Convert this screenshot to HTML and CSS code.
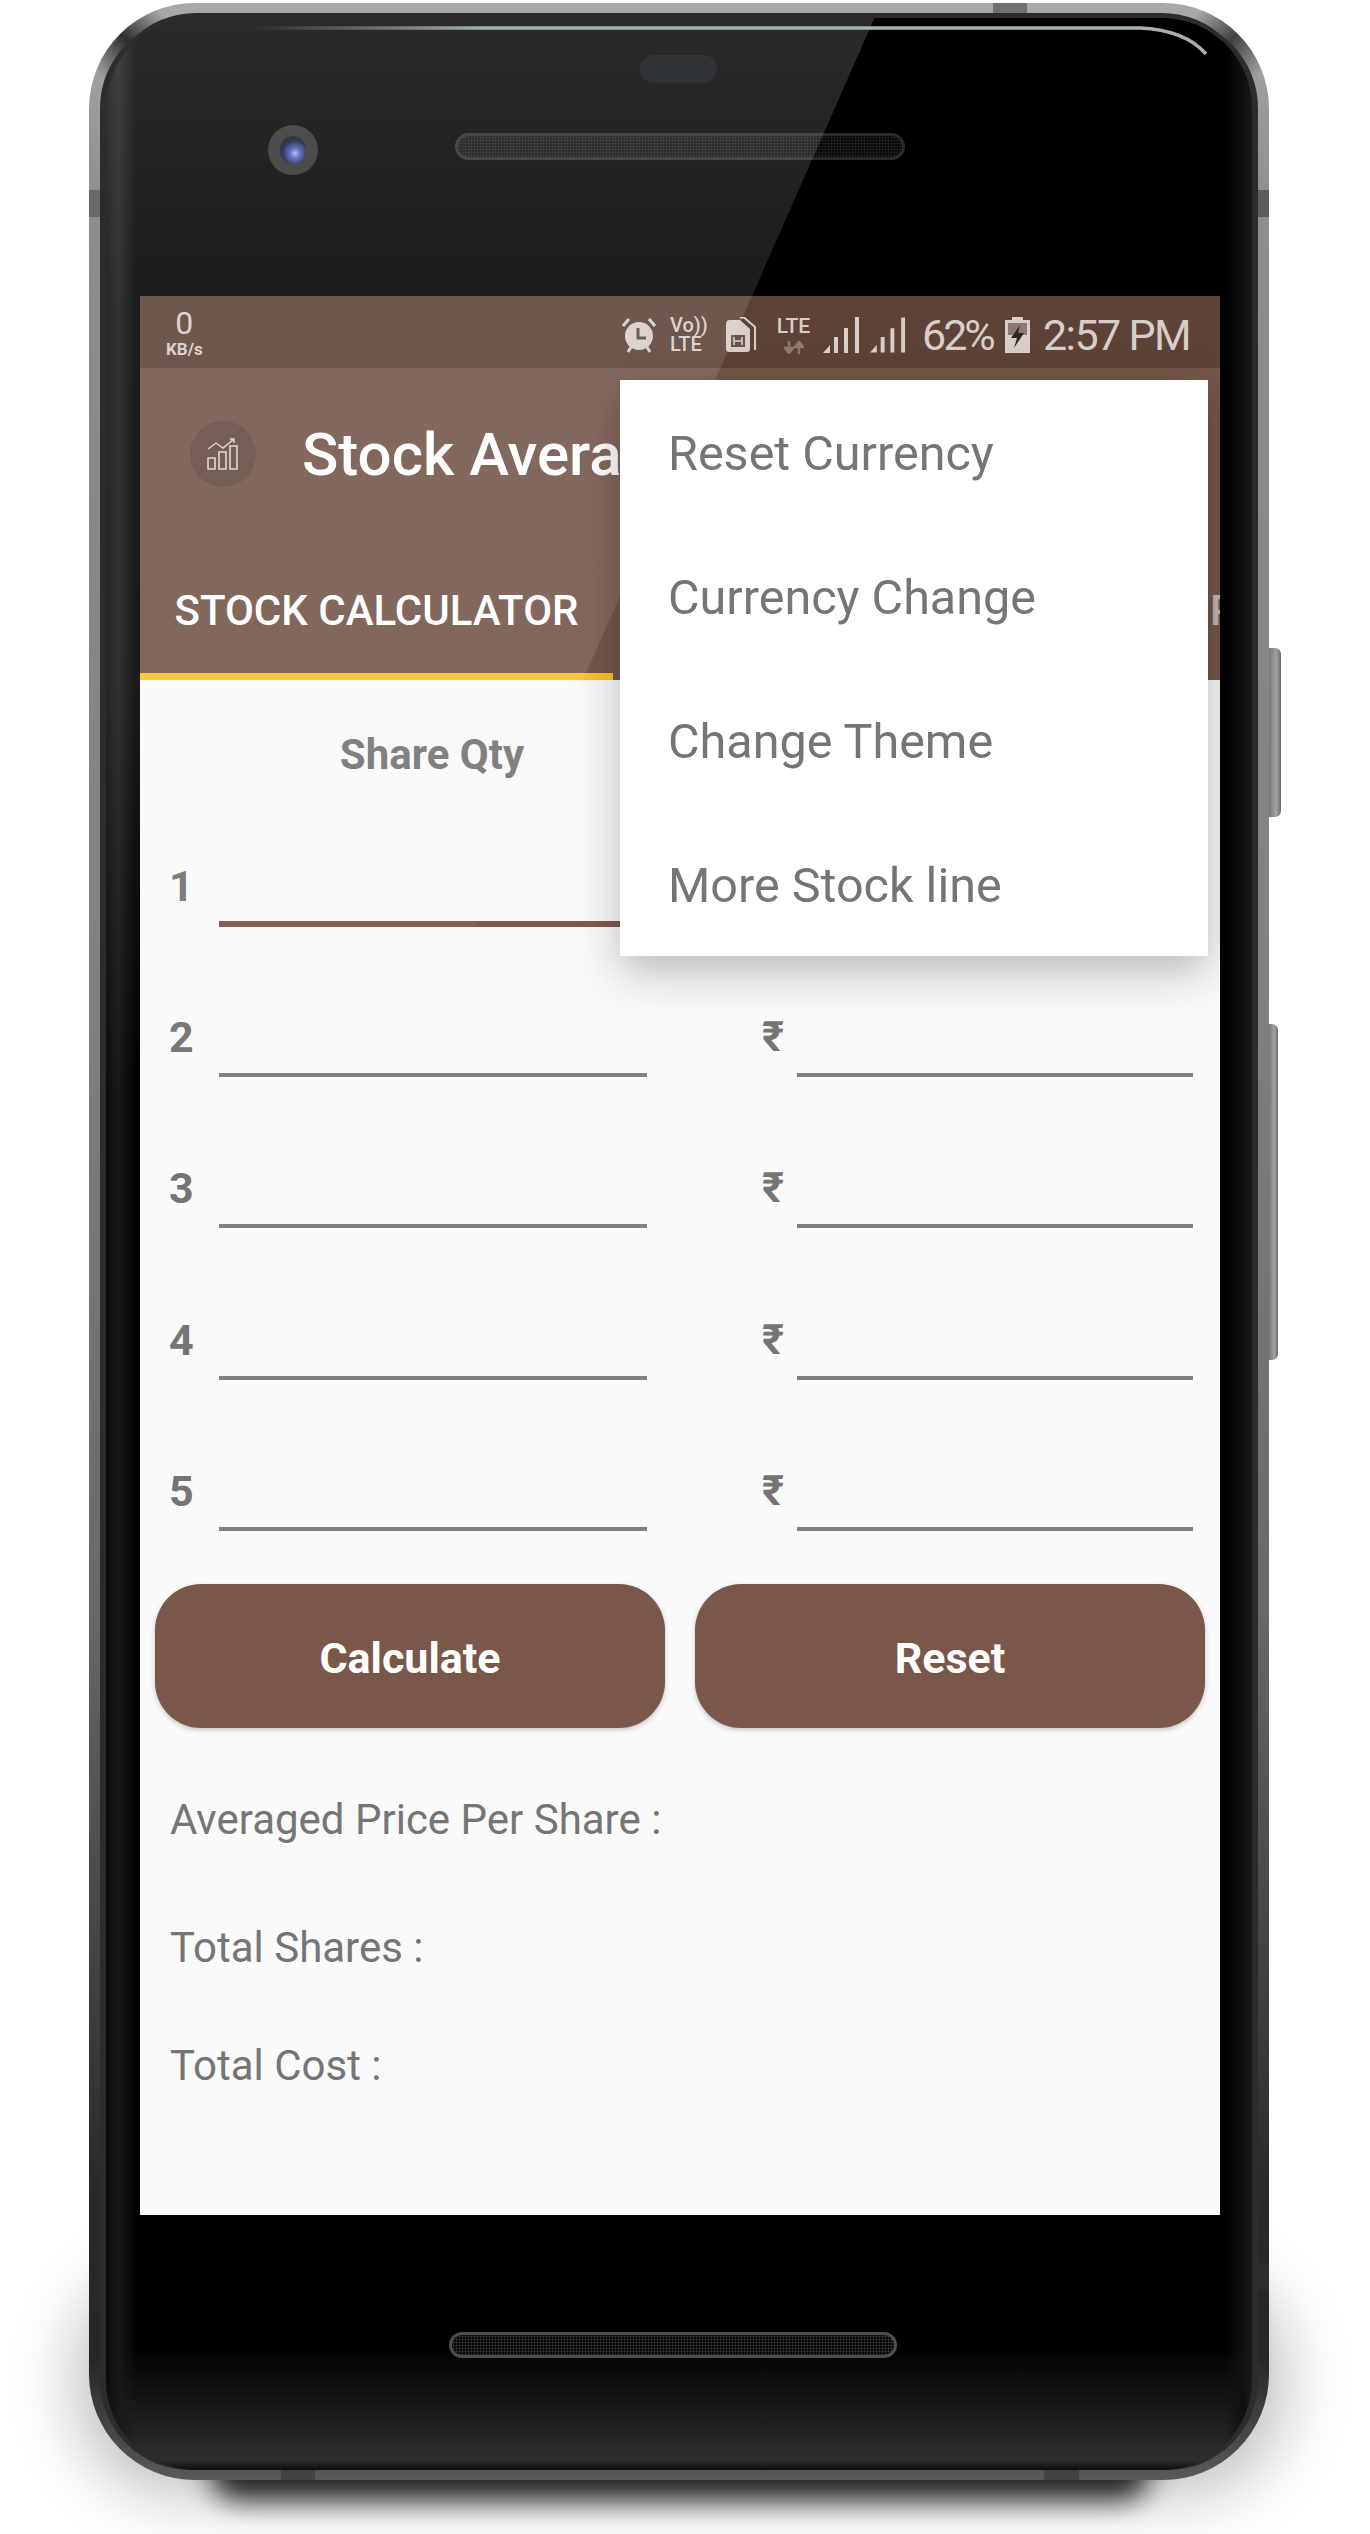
FILE: index.html
```html
<!DOCTYPE html>
<html>
    <head>
        <meta charset="utf-8">
        <title>Stock Average</title>
        <link rel="stylesheet" href="styles.css">
    </head>
    <body>
        <div class="stage">
            <div class="shadow-wide"></div>
            <div class="shadow-floor"></div>

            <div class="phone">
                <span class="key key-upper"></span>
                <span class="key key-lower"></span>
                <span class="band band-top"></span>
                <span class="band band-left"></span>
                <span class="band band-right"></span>
                <span class="band band-right-low"></span>
                <span class="band band-bottom-a"></span>
                <span class="band band-bottom-b"></span>

                <div class="glass">
                    <div class="glare"></div>

                    <div class="bezel-top">
                        <span class="sensor"></span>
                        <div class="camera"><span class="lens"></span></div>
                        <div class="speaker"></div>
                    </div>

                    <div class="screen">
                        <div class="status">
                            <div class="speed">
                                <span class="speed-num">0</span>
                                <span class="speed-unit">KB/s</span>
                            </div>
                            <div class="status-right">
                                <svg class="ic-alarm" width="36" height="36" viewBox="0 0 36 36">
                                    <circle cx="18" cy="19" r="14" fill="#d8cdc8"/>
                                    <path d="M2 9 L8 2 M34 9 L28 2" stroke="#d8cdc8" stroke-width="3" fill="none"/>
                                    <path d="M7 35 L10 30 M29 35 L26 30" stroke="#d8cdc8" stroke-width="3" fill="none"/>
                                    <path d="M17 11 V21 H25" stroke="#5c4a42" stroke-width="3" fill="none"/>
                                </svg>
                                <div class="volte">
                                    <span>Vo))</span>
                                    <span>LTE</span>
                                </div>
                                <svg class="ic-sim" width="32" height="36" viewBox="0 0 32 36">
                                    <path d="M1 7 Q1 3 5 3 H15 L25 12 V32 Q25 35 22 35 H4 Q1 35 1 32 Z" fill="#d8cdc8"/>
                                    <path d="M15 0.5 H19 L30 10 V33" stroke="#d8cdc8" stroke-width="2" fill="none"/>
                                    <rect x="6" y="18" width="14" height="12" fill="#6a5248"/>
                                    <path d="M9 20 V28 M17 20 V28 M9 24 H17" stroke="#d8cdc8" stroke-width="1.6" fill="none"/>
                                </svg>
                                <div class="lte">
                                    <span>LTE</span>
                                    <svg width="20" height="13" viewBox="0 0 20 13">
                                        <path d="M5 0 V8 M1 7 L5 12 L9 7 Z M15 13 V5 M11 6 L15 1 L19 6 Z" stroke="#8f7a70" stroke-width="2.4" fill="#8f7a70"/>
                                    </svg>
                                </div>
                                <svg class="ic-signal" width="37" height="36" viewBox="0 0 37 36">
                                    <path d="M0 36 L7 28 V36 Z M11 36 V20 H15 V36 Z M21 36 V11 H25 V36 Z M32 36 V0 H36 V36 Z" fill="#d8cdc8"/>
                                </svg>
                                <svg class="ic-signal" width="36" height="36" viewBox="0 0 37 36">
                                    <path d="M0 36 L7 28 V36 Z M11 36 V20 H15 V36 Z M21 36 V11 H25 V36 Z M32 36 V0 H36 V36 Z" fill="#d8cdc8"/>
                                </svg>
                                <span class="pct">62%</span>
                                <svg class="ic-batt" width="25" height="36" viewBox="0 0 25 36">
                                    <path d="M7 0 H18 V3 H25 V36 H0 V3 H7 Z" fill="#d8cdc8"/>
                                    <rect x="3" y="6" width="19" height="12" fill="#8c7a72"/>
                                    <path d="M15 8 L6 21 H12 L9 31 L19 16 H13 Z" fill="#2e2623"/>
                                </svg>
                                <span class="clock">2:57 PM</span>
                            </div>
                        </div>

                        <div class="appbar">
                            <div class="logo">
                                <svg width="32" height="32" viewBox="0 0 32 32">
                                    <path d="M1 11 L9 5 L16 10 L27 1 M23 1 H27 V5" stroke="#ddd3ce" stroke-width="1.4" fill="none"/>
                                    <path d="M1 20 H8 V31 H1 Z M12 14 H19 V31 H12 Z M23 8 H30 V31 H23 Z" stroke="#ddd3ce" stroke-width="1.6" fill="none"/>
                                </svg>
                            </div>
                            <span class="app-title">Stock Avera</span>
                        </div>

                        <div class="tabs">
                            <div class="tab tab-on">STOCK CALCULATOR</div>
                            <div class="tab tab-off">P</div>
                        </div>

                        <div class="content">
                            <div class="col-head">Share Qty</div>

                            <div class="row row-first">
                                <span class="num">1</span>
                                <div class="field field-on"></div>
                            </div>
                            <div class="row">
                                <span class="num">2</span>
                                <div class="field"></div>
                                <span class="rupee">₹</span>
                                <div class="field field-price"></div>
                            </div>
                            <div class="row">
                                <span class="num">3</span>
                                <div class="field"></div>
                                <span class="rupee">₹</span>
                                <div class="field field-price"></div>
                            </div>
                            <div class="row">
                                <span class="num">4</span>
                                <div class="field"></div>
                                <span class="rupee">₹</span>
                                <div class="field field-price"></div>
                            </div>
                            <div class="row">
                                <span class="num">5</span>
                                <div class="field"></div>
                                <span class="rupee">₹</span>
                                <div class="field field-price"></div>
                            </div>

                            <div class="actions">
                                <button class="btn">Calculate</button>
                                <button class="btn">Reset</button>
                            </div>

                            <p class="result result-avg">Averaged Price Per Share :</p>
                            <p class="result result-shares">Total Shares :</p>
                            <p class="result result-cost">Total Cost :</p>
                        </div>

                        <div class="menu">
                            <div class="menu-item">Reset Currency</div>
                            <div class="menu-item">Currency Change</div>
                            <div class="menu-item">Change Theme</div>
                            <div class="menu-item">More Stock line</div>
                        </div>
                    </div>

                    <div class="bezel-bottom">
                        <div class="speaker speaker-low"></div>
                    </div>
                </div>

                <svg class="edge-light" width="1180" height="70" viewBox="0 0 1180 70">
                    <defs>
                        <linearGradient id="edgeFade" x1="0" x2="1" y1="0" y2="0">
                            <stop offset="0" stop-color="#a8b0b0" stop-opacity="0"/>
                            <stop offset="0.25" stop-color="#a8b0b0"/>
                            <stop offset="1" stop-color="#a8b0b0"/>
                        </linearGradient>
                    </defs>
                    <path d="M161 25 L1051 25 Q1096 27 1117 51" stroke="url(#edgeFade)" stroke-width="3.5" fill="none"/>
                </svg>
            </div>
        </div>
    </body>
</html>
```

FILE: styles.css
```css
body{
    margin: 0;
    background-color: #ffffff;
    font-family: Roboto, "DejaVu Sans", sans-serif;
}

.stage{
    position: relative;
    height: 2534px;
    padding: 3px 0 0 89px;
    box-sizing: border-box;
    overflow: hidden;
}

/* soft shadows under the device */
.shadow-wide{
    position: absolute;
    left: 70px;
    width: 1220px;
    top: 2260px;
    height: 240px;
    background: rgba(0, 0, 0, 0.22);
    border-radius: 110px;
    filter: blur(28px);
}

.shadow-floor{
    position: absolute;
    left: 210px;
    width: 940px;
    top: 2440px;
    height: 60px;
    background: #222222;
    border-radius: 50px;
    filter: blur(14px);
}

.phone{
    position: relative;
    width: 1180px;
    height: 2477px;
    padding: 15px 17px 10px 17px;
    box-sizing: border-box;
    border-radius: 106px;
    background-color: #808080;
    background-image:
        linear-gradient(45deg, transparent 22%, rgba(24, 24, 24, 0.85) 50%, transparent 78%),
        linear-gradient(135deg, transparent 22%, rgba(24, 24, 24, 0.7) 50%, transparent 78%),
        linear-gradient(180deg, #a9a9a9 0, #8e8e8e 8%, #808080 40%, #686868 65%, #2a2a2a 88%, #262626 95%, #5a5a5a 100%);
    background-size: 110px 110px, 110px 110px, 100% 100%;
    background-position: left top, right top, left top;
    background-repeat: no-repeat;
}

.key{
    position: absolute;
    background: linear-gradient(90deg, #777777, #a2a2a2 60%, #6a6a6a);
    border-radius: 0 6px 6px 0;
}

.key-upper{
    left: 1180px;
    top: 645px;
    width: 12px;
    height: 169px;
}

.key-lower{
    left: 1180px;
    top: 1021px;
    width: 9px;
    height: 336px;
}

.band{
    position: absolute;
    background: #6a6a6a;
}

.band-top{ left: 904px; top: 0; width: 34px; height: 14px; background: #707070; }
.band-left{ left: 0; top: 187px; width: 12px; height: 27px; }
.band-right{ left: 1168px; top: 187px; width: 12px; height: 27px; background: #5c5c5c; }
.band-right-low{ left: 1168px; top: 2260px; width: 12px; height: 26px; background: #2e2e2e; }
.band-bottom-a{ left: 192px; top: 2467px; width: 34px; height: 10px; background: #444444; }
.band-bottom-b{ left: 955px; top: 2467px; width: 35px; height: 10px; background: #444444; }

.glass{
    position: relative;
    height: 2452px;
    border-radius: 90px;
    overflow: hidden;
    background-color: #000000;
    background-image:
        linear-gradient(90deg, #0c0c0c 0, #1a1a1a 12px, transparent 30px),
        linear-gradient(270deg, #1a1a1a 0, #111111 8px, transparent 26px),
        linear-gradient(180deg, #000000 95%, #2e2e2e 99.6%, #0c0c0c 100%);
    background-size: 34px 100%, 32px 100%, 100% 100%;
    background-position: left top, right top, left top;
    background-repeat: no-repeat;
    box-shadow: -6px 0 0 #2c2c2c, 6px 0 0 #2c2c2c, 0 -5px 0 #2c2c2c;
}

.glare{
    position: absolute;
    left: -17px;
    top: -15px;
    width: 800px;
    height: 1800px;
    background: linear-gradient(180deg, rgba(255, 255, 255, 0.17) 0, rgba(255, 255, 255, 0.11) 300px, rgba(255, 255, 255, 0.1) 680px, rgba(255, 255, 255, 0) 1100px);
    clip-path: polygon(0 0, 792px 0, 0 1799px);
    z-index: 1;
}

.edge-light{
    position: absolute;
    left: 0;
    top: 0;
    z-index: 1;
}

.bezel-top{
    position: relative;
    height: 278px;
    padding: 107px 0 0 162px;
    box-sizing: border-box;
    display: flex;
    align-items: flex-start;
}

.sensor{
    position: absolute;
    left: 534px;
    top: 37px;
    width: 77px;
    height: 28px;
    border-radius: 14px;
    background: #090c11;
}

.camera{
    width: 50px;
    height: 50px;
    border-radius: 50%;
    background: #303030;
    display: flex;
    align-items: center;
    justify-content: center;
}

.lens{
    width: 26px;
    height: 28px;
    border-radius: 50%;
    background: radial-gradient(circle at 58% 62%, #a9b8f0 0, #4c5fb8 22%, #14193a 55%, #0a0a12 100%);
}

.speaker{
    width: 450px;
    height: 27px;
    margin: 8px 0 0 137px;
    box-sizing: border-box;
    border-radius: 14px;
    border: 3px solid #2a2a2a;
    background-color: #0a0a0a;
    background-image: radial-gradient(circle, #2a2a2a 0.8px, transparent 1.1px);
    background-size: 3px 3px;
}

.speaker-low{
    width: 448px;
    height: 26px;
    margin: 0 0 0 343px;
    border-color: #4e4e4e;
    background-image: radial-gradient(circle, #444444 0.8px, transparent 1.1px);
}

.bezel-bottom{
    height: 255px;
    padding-top: 117px;
    box-sizing: border-box;
}

.screen{
    position: relative;
    width: 1080px;
    height: 1919px;
    margin-left: 34px;
    overflow: hidden;
    background-color: #fafafa;
}

.status{
    height: 72px;
    display: flex;
    justify-content: space-between;
    align-items: center;
    padding: 0 31px 0 23px;
    box-sizing: border-box;
    background-color: #5c4237;
    color: #d8cdc8;
}

.speed{
    display: flex;
    flex-direction: column;
    align-items: center;
    margin: 2px 0 0 3px;
}

.speed-num{
    font-size: 32px;
    line-height: 28px;
    margin-bottom: 3px;
}

.speed-unit{
    font-size: 17px;
    line-height: 18px;
    font-weight: 700;
}

.status-right{
    display: flex;
    align-items: center;
    margin-top: 6px;
}

.volte{
    display: flex;
    flex-direction: column;
    width: 35px;
    margin: 0 20px 0 13px;
    font-size: 20px;
    line-height: 19px;
    font-weight: 500;
}

.lte{
    display: flex;
    flex-direction: column;
    align-items: center;
    width: 37px;
    margin: 0 11px 0 18px;
    font-size: 21px;
    line-height: 21px;
    font-weight: 500;
}

.lte svg{
    margin-top: 4px;
}

.ic-signal{
    margin-right: 10px;
}

.ic-signal + .ic-signal{
    margin-right: 16px;
}

.pct{
    width: 71px;
    font-size: 43px;
    letter-spacing: -3px;
    line-height: 44px;
    margin-right: 12px;
    white-space: nowrap;
}

.clock{
    width: 146px;
    font-size: 43px;
    letter-spacing: -1.6px;
    line-height: 44px;
    margin-left: 13px;
    white-space: nowrap;
}

.appbar{
    height: 162px;
    display: flex;
    align-items: center;
    padding: 10px 0 0 50px;
    box-sizing: border-box;
    background-color: #74564a;
}

.logo{
    width: 66px;
    height: 66px;
    border-radius: 50%;
    background-color: #644b41;
    display: flex;
    align-items: center;
    justify-content: center;
}

.app-title{
    margin-left: 46px;
    color: #ffffff;
    font-size: 60px;
    font-weight: 500;
}

.tabs{
    height: 150px;
    display: flex;
    background-color: #74564a;
}

.tab{
    flex-shrink: 0;
    box-sizing: border-box;
    padding-top: 56px;
    font-size: 42px;
    line-height: 50px;
    font-weight: 500;
    color: #ffffff;
}

.tab-on{
    width: 473px;
    text-align: center;
    border-bottom: 7px solid #fbc02d;
}

.tab-off{
    padding-left: 597px;
    color: rgba(255, 255, 255, 0.62);
}

.content{
    height: 1535px;
    box-sizing: border-box;
}

.col-head{
    width: 584px;
    text-align: center;
    height: 96px;
    line-height: 150px;
    font-size: 42px;
    font-weight: 700;
    color: #757575;
}

.row{
    height: 151.5px;
    display: flex;
    align-items: flex-end;
    padding-left: 29px;
}

.row-first{
    height: 151px;
    margin-bottom: -2px;
}

.num{
    width: 50px;
    margin-bottom: 17px;
    font-size: 43px;
    line-height: 46px;
    font-weight: 700;
    color: #757575;
}

.row-first .num{
    margin-bottom: 18px;
}

.rupee{
    width: 35px;
    margin: 0 0 17px 115px;
    font-size: 42px;
    line-height: 46px;
    font-weight: 700;
    color: #757575;
}

.field{
    width: 428px;
    border-bottom: 4px solid #808080;
}

.field-price{
    width: 396px;
}

.field-on{
    border-bottom: 6px solid #7d5a4d;
}

.actions{
    display: flex;
    gap: 30px;
    margin: 53px 0 0 15px;
}

.btn{
    width: 510px;
    height: 144px;
    padding-top: 4px;
    border: none;
    border-radius: 46px;
    background-color: #79574a;
    box-shadow: 0 2px 5px rgba(0, 0, 0, 0.22);
    color: #ffffff;
    font-family: Roboto, sans-serif;
    font-size: 43px;
    font-weight: 700;
}

.result{
    margin: 0 0 0 30px;
    color: #757575;
    font-size: 42px;
    line-height: 50px;
}

.result-avg{ margin-top: 67px; }
.result-shares{ margin-top: 78px; }
.result-cost{ margin-top: 68px; }

.menu{
    position: absolute;
    left: 480px;
    top: 84px;
    width: 588px;
    background-color: #ffffff;
    box-shadow: 0 16px 42px rgba(0, 0, 0, 0.26);
    z-index: 2;
}

.menu-item{
    height: 144px;
    padding-left: 48px;
    line-height: 147px;
    font-size: 48.5px;
    color: #757575;
}
```
